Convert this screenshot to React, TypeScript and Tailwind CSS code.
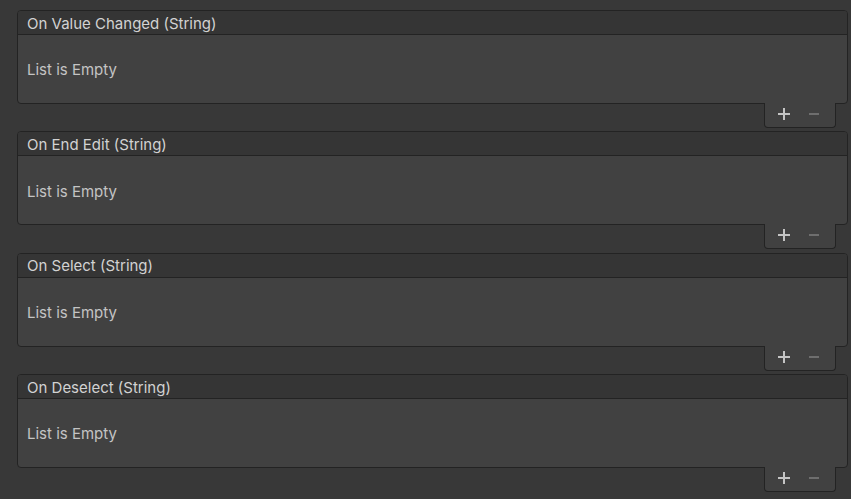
const EVENTS = [
  'On Value Changed (String)',
  'On End Edit (String)',
  'On Select (String)',
  'On Deselect (String)',
];

const EventList = ({ title }: { title: string }) => {
  return (
    <div className="flex flex-col">
      <div className="h-[94px] rounded-[4px] border border-[#232323] bg-[#414141] flex flex-col overflow-hidden">
        {/* Header */}
        <div className="h-[24px] flex-shrink-0 border-b border-[#232323] bg-[#353535] flex items-center pl-[9px] pt-[3px] text-[15px] text-[#d2d2d2]">
          {title}
        </div>
        {/* Body */}
        <div className="flex-1 flex items-center pl-[9px] pt-[3px] text-[15px] text-[#c4c4c4]">
          List is Empty
        </div>
      </div>

      {/* Footer */}
      <div className="flex justify-end pr-[12px]">
        <div className="relative -mt-px w-[72px] h-[25px] rounded-b-[4px] border-x border-b border-[#232323] bg-[#414141] flex items-center pl-[13px] pb-[2px] gap-[19px]">
          <span className="w-[12px] h-[12px] relative">
            <span className="absolute left-0 right-0 top-[5px] h-[2px] bg-[#c4c4c4]" />
            <span className="absolute top-0 bottom-0 left-[5px] w-[2px] bg-[#c4c4c4]" />
          </span>
          <span className="w-[10px] h-[12px] relative">
            <span className="absolute left-0 right-0 top-[5px] h-[2px] bg-[#6e6e6e]" />
          </span>
        </div>
      </div>
    </div>
  );
};

export default function App() {
  return (
    <div
      className="w-[851px] h-[499px] bg-[#383838] pt-[10px] pl-[17px] pr-[3px] flex flex-col gap-[3.33px] overflow-hidden"
      style={{ fontFamily: 'Inter, "Noto Sans", sans-serif' }}
    >
      {EVENTS.map((e) => (
        <EventList key={e} title={e} />
      ))}
    </div>
  );
}
